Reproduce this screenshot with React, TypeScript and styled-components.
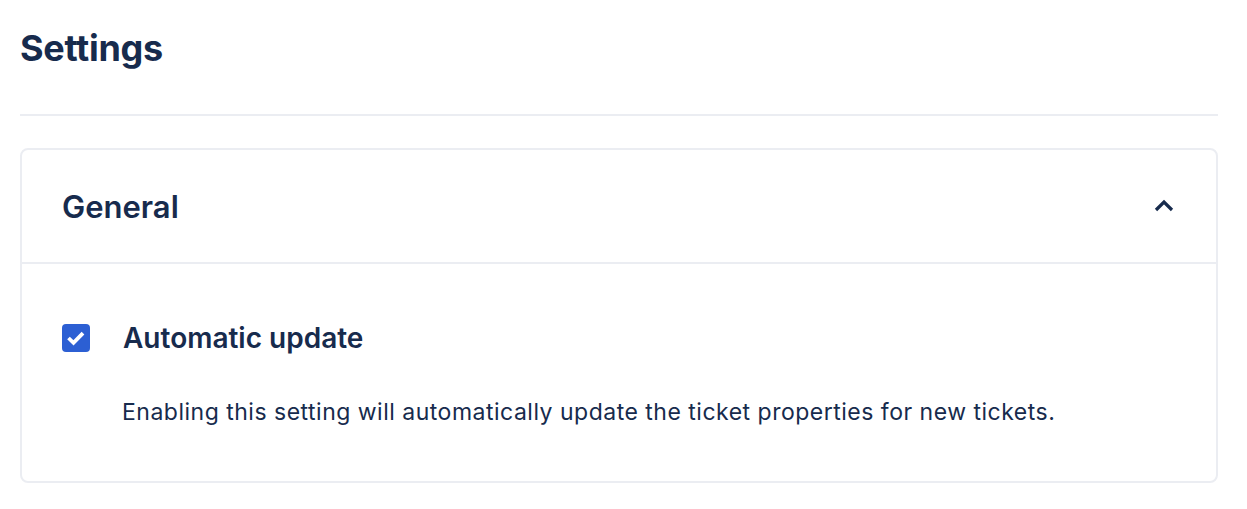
import React from "react";
import styled, { createGlobalStyle } from "styled-components";

const Global = createGlobalStyle`
  html, body { margin: 0; padding: 0; background: #ffffff; }
  body { font-family: Inter, "Noto Sans", "Liberation Sans", sans-serif; color: #172b4d; }
`;

const Page = styled.div`
  padding: 0 29px 0 20px;
  display: flex;
  flex-direction: column;
`;

const Title = styled.h1`
  margin: 0;
  height: 95px;
  display: flex;
  align-items: center;
  font-size: 36px;
  font-weight: 700;
  letter-spacing: -0.3px;
  color: #172b4d;
`;

const Divider = styled.hr`
  margin: 19px 0 32px;
  border: none;
  border-top: 2px solid #ebedf2;
`;

const Card = styled.section`
  border: 2px solid #ebedf2;
  border-radius: 8px;
  display: flex;
  flex-direction: column;
`;

const CardHeader = styled.div`
  height: 112px;
  display: flex;
  align-items: center;
  justify-content: space-between;
  padding: 0 40px 0 40px;
  border-bottom: 2px solid #ebedf2;
`;

const CardTitle = styled.h2`
  margin: 0;
  font-size: 31px;
  font-weight: 600;
  color: #172b4d;
`;

const ToggleButton = styled.button`
  border: none;
  background: none;
  padding: 0;
  width: 24px;
  height: 24px;
  display: flex;
  align-items: center;
  justify-content: center;
  cursor: pointer;
  color: #172b4d;
`;

const CardBody = styled.div`
  padding: 59px 40px 53px 40px;
  display: flex;
  flex-direction: column;
  gap: 43px;
`;

const OptionRow = styled.label`
  display: flex;
  align-items: center;
  gap: 33px;
  height: 30px;
`;

const Box = styled.span`
  width: 28px;
  height: 28px;
  border-radius: 4px;
  background: #2c5fd3;
  display: flex;
  align-items: center;
  justify-content: center;
  flex-shrink: 0;
`;

const OptionLabel = styled.span`
  font-size: 28px;
  font-weight: 600;
  color: #172b4d;
`;

const Description = styled.p`
  margin: 0;
  padding-left: 60px;
  font-size: 23px;
  font-weight: 400;
  letter-spacing: 0.5px;
  line-height: 32px;
  color: #172b4d;
`;

export default function App() {
  return (
    <>
      <Global />
      <Page>
        <Title>Settings</Title>
        <Divider />
        <Card>
          <CardHeader>
            <CardTitle>General</CardTitle>
            <ToggleButton aria-label="Collapse">
              <svg width="20" height="14" viewBox="0 0 20 14" fill="none">
                <path d="M2 11 L10 3 L18 11" stroke="#172b4d" strokeWidth="3.2" strokeLinecap="butt" strokeLinejoin="miter" />
              </svg>
            </ToggleButton>
          </CardHeader>
          <CardBody>
            <OptionRow>
              <Box>
                <svg width="28" height="28" viewBox="0 0 28 28" fill="none">
                  <path d="M6.5 14 L11.5 18.8 L21 9.2" stroke="#ffffff" strokeWidth="3.8" strokeLinecap="butt" strokeLinejoin="miter" />
                </svg>
              </Box>
              <OptionLabel>Automatic update</OptionLabel>
            </OptionRow>
            <Description>
              Enabling this setting will automatically update the ticket properties for new tickets.
            </Description>
          </CardBody>
        </Card>
      </Page>
    </>
  );
}
